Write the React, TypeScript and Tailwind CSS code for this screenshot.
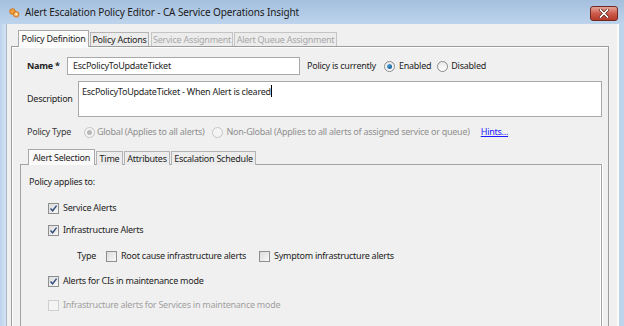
import React from "react";

const F = { fontFamily: '"Noto Sans", "Open Sans", sans-serif' };

function Radio({ checked, disabled }: { checked?: boolean; disabled?: boolean }) {
  return (
    <span
      className={
        "inline-flex shrink-0 items-center justify-center w-[11px] h-[11px] rounded-full border " +
        (disabled ? "border-[#c4c4c4] bg-[#f4f4f4]" : "border-[#8a8a8a] bg-gradient-to-b from-[#e8e8e8] to-[#ffffff]")
      }
    >
      {checked && (
        <span
          className={
            "w-[5px] h-[5px] rounded-full " +
            (disabled ? "bg-[#b8b8b8]" : "bg-gradient-to-br from-[#5fb3e6] to-[#0a4f8a]")
          }
        />
      )}
    </span>
  );
}

function Check({ checked, disabled }: { checked?: boolean; disabled?: boolean }) {
  return (
    <span
      className={
        "inline-flex shrink-0 items-center justify-center w-[11px] h-[11px] border " +
        (disabled ? "border-[#cfcfcf] bg-[#f4f4f4]" : "border-[#8e8f8f] bg-gradient-to-br from-[#dcdcdc] to-[#f8f8f8]")
      }
    >
      {checked && (
        <svg width="9" height="9" viewBox="0 0 9 9">
          <path d="M1.5 4.6 L3.6 6.8 L7.6 1.6" fill="none" stroke="#34507e" strokeWidth="1.5" />
        </svg>
      )}
    </span>
  );
}

export default function App() {
  return (
    <div className="w-[624px] h-[326px] overflow-hidden flex flex-col bg-[#c0d5ec] text-[#1e1e1e] whitespace-nowrap" style={F}>
      {/* Title bar */}
      <div className="h-[24px] flex items-start bg-gradient-to-b from-[#a4bfdd] to-[#bed4ec] shrink-0">
        <svg className="ml-[9px] mt-[8px]" width="11" height="10" viewBox="0 0 11 10">
          <circle cx="3.5" cy="3.5" r="2.8" fill="#f2a03b" stroke="#c46a12" strokeWidth="0.8" />
          <circle cx="7.2" cy="6.3" r="2.8" fill="#f6b25a" stroke="#c46a12" strokeWidth="0.8" />
          <circle cx="7.2" cy="6.3" r="1" fill="#fff5e0" />
        </svg>
        <span className="ml-[5px] mt-[6px] text-[10px] leading-[12px] tracking-[-0.1px] text-[#1b1b1b]">
          Alert Escalation Policy Editor - CA Service Operations Insight
        </span>
        <div className="ml-auto mr-[6px] mt-[6px] w-[28px] h-[15px] rounded-[3px] border border-[#6e2a22] bg-gradient-to-b from-[#e4a49a] via-[#cc5b4b] to-[#b8392a] flex items-center justify-center">
          <svg width="10" height="9" viewBox="0 0 10 9">
            <path d="M1.5 1 L8.5 8 M8.5 1 L1.5 8" stroke="#4a1a14" strokeWidth="3" strokeLinecap="square" />
            <path d="M1.5 1 L8.5 8 M8.5 1 L1.5 8" stroke="#ffffff" strokeWidth="1.7" strokeLinecap="square" />
          </svg>
        </div>
      </div>

      {/* Body */}
      <div className="flex-1 flex min-h-0 tracking-[-0.25px]">
        <div className="w-[7px] bg-gradient-to-r from-[#bcd3ec] to-[#d4e3f3] border-r border-[#a9b8c8]" />
        <div className="flex-1 bg-[#f0f0f0] pl-[4px] pr-[1px] pt-[6px] flex flex-col border-r-2 border-[#fbfbfb]">
          {/* outer tabs */}
          <div className="flex items-end h-[17px] pl-[7px] text-[9px] leading-none relative z-10">
            <div className="h-[17px] w-[71px] bg-[#fcfcfc] border border-b-0 border-[#a8a8a8] flex items-center justify-center pb-[1px]">
              Policy Definition
            </div>
            <div className="h-[14px] w-[59px] ml-[1px] bg-[#ececec] border border-b-0 border-[#b4b4b4] flex items-center justify-center mb-[1px]">
              Policy Actions
            </div>
            <div className="h-[14px] w-[82px] ml-[2px] bg-[#ececec] border border-b-0 border-[#c4c4c4] flex items-center justify-center text-[#a8a8a8] mb-[1px]">
              Service Assignment
            </div>
            <div className="h-[14px] w-[103px] ml-[1px] bg-[#ececec] border border-b-0 border-[#c4c4c4] flex items-center justify-center text-[#a8a8a8] mb-[1px]">
              Alert Queue Assignment
            </div>
          </div>
          {/* outer panel */}
          <div className="flex-1 mr-[7px] -mt-[1px] border border-[#9c9c9c] border-b-0 shadow-[inset_1px_1px_0_#ffffff] flex flex-col pl-[15px] pt-[10px] text-[9px]">
            {/* Name row */}
            <div className="flex items-center h-[18px]">
              <span className="w-[40px] font-bold">Name *</span>
              <div className="w-[233px] h-[18px] border border-[#a9a9a9] bg-white flex items-center pl-[5px]">
                EscPolicyToUpdateTicket
              </div>
              <span className="ml-[7px]">Policy is currently</span>
              <span className="ml-[8px] flex items-center">
                <Radio checked />
                <span className="ml-[4px]">Enabled</span>
              </span>
              <span className="ml-[6px] flex items-center">
                <Radio />
                <span className="ml-[3px]">Disabled</span>
              </span>
            </div>
            {/* Description row */}
            <div className="flex items-center mt-[6px] h-[36px]">
              <span className="w-[51px]">Description</span>
              <div className="w-[524px] h-[36px] border border-[#a9a9a9] bg-white pl-[3px] pt-[3px] flex items-start">
                <span>EscPolicyToUpdateTicket - When Alert is cleared</span>
                <span className="w-[1px] h-[12px] bg-black" />
              </div>
            </div>
            {/* Policy type */}
            <div className="flex items-center mt-[8px] h-[14px] text-[#8f8f8f]">
              <span className="w-[57px] text-[#3a3a3a]">Policy Type</span>
              <Radio checked disabled />
              <span className="ml-[2px]">Global (Applies to all alerts)</span>
              <span className="ml-[8px] flex items-center">
                <Radio disabled />
                <span className="ml-[3px]">Non-Global (Applies to all alerts of assigned service or queue)</span>
              </span>
              <span className="ml-[11px] text-[#1a1aff] underline">Hints...</span>
            </div>
            {/* inner tabs */}
            <div className="flex items-end h-[17px] mt-[9px] ml-[1px] relative z-10">
              <div className="h-[16px] w-[67px] bg-[#fafafa] border border-b-0 border-[#a8a8a8] flex items-center justify-center">
                Alert Selection
              </div>
              <div className="h-[14px] w-[27px] ml-[1px] bg-[#ececec] border border-b-0 border-[#b4b4b4] flex items-center justify-center">
                Time
              </div>
              <div className="h-[14px] w-[46px] ml-[1px] bg-[#ececec] border border-b-0 border-[#b4b4b4] flex items-center justify-center">
                Attributes
              </div>
              <div className="h-[14px] w-[85px] ml-[1px] bg-[#ececec] border border-b-0 border-[#b4b4b4] flex items-center justify-center">
                Escalation Schedule
              </div>
            </div>
            {/* inner panel */}
            <div className="flex-1 -ml-[7px] mr-[6px] -mt-[1px] border border-[#a4a4a4] border-b-0 shadow-[inset_-1px_0_0_#ffffff,1px_0_0_#ffffff] pl-[8px] pt-[11px] flex flex-col">
              <div className="h-[12px] flex items-center">Policy applies to:</div>
              <div className="flex items-center mt-[14px] ml-[19px] h-[12px]">
                <Check checked />
                <span className="ml-[4px]">Service Alerts</span>
              </div>
              <div className="flex items-center mt-[10px] ml-[19px] h-[12px]">
                <Check checked />
                <span className="ml-[4px]">Infrastructure Alerts</span>
              </div>
              <div className="flex items-center mt-[14px] ml-[48px] h-[12px]">
                <span className="w-[29px]">Type</span>
                <Check />
                <span className="ml-[4px]">Root cause infrastructure alerts</span>
                <span className="ml-[13px] flex items-center">
                  <Check />
                  <span className="ml-[4px]">Symptom infrastructure alerts</span>
                </span>
              </div>
              <div className="flex items-center mt-[13px] ml-[19px] h-[12px]">
                <Check checked />
                <span className="ml-[4px]">Alerts for CIs in maintenance mode</span>
              </div>
              <div className="flex items-center mt-[12px] ml-[19px] h-[12px] text-[#a0a0a0]">
                <Check disabled />
                <span className="ml-[4px]">Infrastructure alerts for Services in maintenance mode</span>
              </div>
            </div>
          </div>
        </div>
        <div className="w-[5px] bg-[#bcd3ec]" />
      </div>
    </div>
  );
}
